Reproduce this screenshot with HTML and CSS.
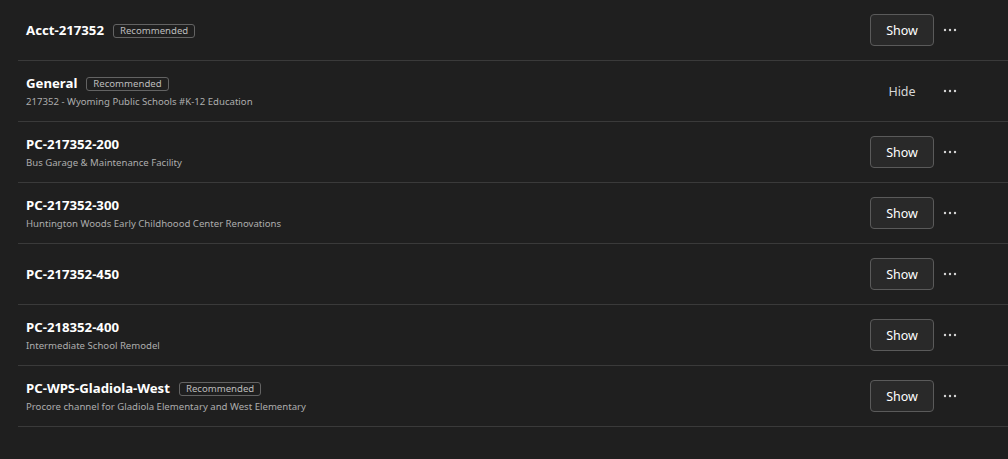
FILE: index.html
```html
<!DOCTYPE html>
<html lang="en">
  <head>
    <meta charset="UTF-8" />
    <meta name="viewport" content="width=device-width, initial-scale=1.0" />
    <title>Channels</title>
    <link rel="stylesheet" href="styles.css">
  </head>
  <body>
    <ul class="channel-list">
      <li class="channel">
        <div class="channel-info">
          <div class="channel-title">
            <span class="channel-name">Acct-217352</span>
            <span class="badge">Recommended</span>
          </div>
        </div>
        <button class="toggle-btn">Show</button>
        <button class="more-btn" aria-label="More options">
          <svg width="14" height="4" viewBox="0 0 14 4"><circle cx="2" cy="2" r="1.2"/><circle cx="7" cy="2" r="1.2"/><circle cx="12" cy="2" r="1.2"/></svg>
        </button>
      </li>
      <li class="channel">
        <div class="channel-info">
          <div class="channel-title">
            <span class="channel-name">General</span>
            <span class="badge">Recommended</span>
          </div>
          <div class="channel-desc">217352 - Wyoming Public Schools #K-12 Education</div>
        </div>
        <button class="toggle-btn toggle-btn--plain">Hide</button>
        <button class="more-btn" aria-label="More options">
          <svg width="14" height="4" viewBox="0 0 14 4"><circle cx="2" cy="2" r="1.2"/><circle cx="7" cy="2" r="1.2"/><circle cx="12" cy="2" r="1.2"/></svg>
        </button>
      </li>
      <li class="channel">
        <div class="channel-info">
          <div class="channel-title">
            <span class="channel-name">PC-217352-200</span>
          </div>
          <div class="channel-desc">Bus Garage &amp; Maintenance Facility</div>
        </div>
        <button class="toggle-btn">Show</button>
        <button class="more-btn" aria-label="More options">
          <svg width="14" height="4" viewBox="0 0 14 4"><circle cx="2" cy="2" r="1.2"/><circle cx="7" cy="2" r="1.2"/><circle cx="12" cy="2" r="1.2"/></svg>
        </button>
      </li>
      <li class="channel">
        <div class="channel-info">
          <div class="channel-title">
            <span class="channel-name">PC-217352-300</span>
          </div>
          <div class="channel-desc">Huntington Woods Early Childhoood Center Renovations</div>
        </div>
        <button class="toggle-btn">Show</button>
        <button class="more-btn" aria-label="More options">
          <svg width="14" height="4" viewBox="0 0 14 4"><circle cx="2" cy="2" r="1.2"/><circle cx="7" cy="2" r="1.2"/><circle cx="12" cy="2" r="1.2"/></svg>
        </button>
      </li>
      <li class="channel">
        <div class="channel-info">
          <div class="channel-title">
            <span class="channel-name">PC-217352-450</span>
          </div>
        </div>
        <button class="toggle-btn">Show</button>
        <button class="more-btn" aria-label="More options">
          <svg width="14" height="4" viewBox="0 0 14 4"><circle cx="2" cy="2" r="1.2"/><circle cx="7" cy="2" r="1.2"/><circle cx="12" cy="2" r="1.2"/></svg>
        </button>
      </li>
      <li class="channel">
        <div class="channel-info">
          <div class="channel-title">
            <span class="channel-name">PC-218352-400</span>
          </div>
          <div class="channel-desc">Intermediate School Remodel</div>
        </div>
        <button class="toggle-btn">Show</button>
        <button class="more-btn" aria-label="More options">
          <svg width="14" height="4" viewBox="0 0 14 4"><circle cx="2" cy="2" r="1.2"/><circle cx="7" cy="2" r="1.2"/><circle cx="12" cy="2" r="1.2"/></svg>
        </button>
      </li>
      <li class="channel">
        <div class="channel-info">
          <div class="channel-title">
            <span class="channel-name">PC-WPS-Gladiola-West</span>
            <span class="badge">Recommended</span>
          </div>
          <div class="channel-desc">Procore channel for Gladiola Elementary and West Elementary</div>
        </div>
        <button class="toggle-btn">Show</button>
        <button class="more-btn" aria-label="More options">
          <svg width="14" height="4" viewBox="0 0 14 4"><circle cx="2" cy="2" r="1.2"/><circle cx="7" cy="2" r="1.2"/><circle cx="12" cy="2" r="1.2"/></svg>
        </button>
      </li>
    </ul>
  </body>
</html>
```

FILE: styles.css
```css
body {
  font-family: "Noto Sans", "Open Sans", Arial, sans-serif;
  margin: 0;
  padding: 0;
  background-color: #1f1f1f;
  color: #ffffff;
}
.channel-list {
  list-style: none;
  margin: 0;
  padding: 0 0 0 18px;
}
.channel {
  display: flex;
  align-items: center;
  height: 60px;
  padding: 0 46px 0 8px;
  border-bottom: 1px solid #3a3a3a;
}
.channel-info {
  flex: 1;
  min-width: 0;
  padding-top: 1px;
}
.channel-title {
  display: flex;
  align-items: center;
  gap: 9px;
}
.channel-name {
  font-size: 13.2px;
  font-weight: 700;
  line-height: 19px;
  color: #ffffff;
}
.badge {
  font-size: 9.6px;
  line-height: 12px;
  color: #bdbdbd;
  border: 1px solid #636363;
  border-radius: 3px;
  padding: 0 6px;
}
.channel-desc {
  font-size: 9.6px;
  line-height: 14px;
  margin-top: 2px;
  color: #adadad;
}
.toggle-btn {
  width: 64px;
  height: 32px;
  font-family: inherit;
  font-size: 12.5px;
  color: #ffffff;
  background-color: #292929;
  border: 1px solid #5a5a5a;
  border-radius: 4px;
  cursor: pointer;
}
.toggle-btn--plain {
  background-color: transparent;
  border-color: transparent;
  color: #d6d6d6;
}
.more-btn {
  display: flex;
  align-items: center;
  justify-content: center;
  width: 24px;
  height: 24px;
  margin-left: 4px;
  padding: 0;
  background: none;
  border: none;
  fill: #d6d6d6;
  cursor: pointer;
}
```
